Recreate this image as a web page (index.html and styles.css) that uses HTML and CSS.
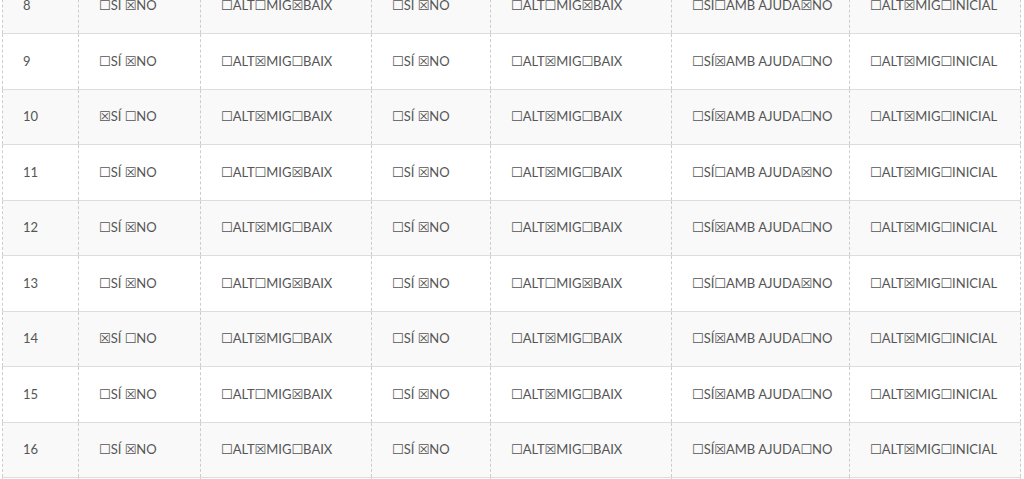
FILE: index.html
```html
<!DOCTYPE html>
<html lang="ca">
<head>
<meta charset="utf-8">
<link rel="stylesheet" href="styles.css">
</head>
<body>
<div class="wrap">
<table class="grid">
<colgroup>
<col class="c0"><col class="c1"><col class="c2"><col class="c3"><col class="c4"><col class="c5"><col class="c6">
</colgroup>
<tbody>
<tr class="odd"><td>8</td><td>☐SÍ ☒NO</td><td>☐ALT☐MIG☒BAIX</td><td>☐SÍ ☒NO</td><td>☐ALT☐MIG☒BAIX</td><td>☐SÍ☐AMB AJUDA☒NO</td><td>☐ALT☒MIG☐INICIAL</td></tr>
<tr><td>9</td><td>☐SÍ ☒NO</td><td>☐ALT☒MIG☐BAIX</td><td>☐SÍ ☒NO</td><td>☐ALT☒MIG☐BAIX</td><td>☐SÍ☒AMB AJUDA☐NO</td><td>☐ALT☒MIG☐INICIAL</td></tr>
<tr class="odd"><td>10</td><td>☒SÍ ☐NO</td><td>☐ALT☒MIG☐BAIX</td><td>☐SÍ ☒NO</td><td>☐ALT☒MIG☐BAIX</td><td>☐SÍ☒AMB AJUDA☐NO</td><td>☐ALT☒MIG☐INICIAL</td></tr>
<tr><td>11</td><td>☐SÍ ☒NO</td><td>☐ALT☐MIG☒BAIX</td><td>☐SÍ ☒NO</td><td>☐ALT☒MIG☐BAIX</td><td>☐SÍ☐AMB AJUDA☒NO</td><td>☐ALT☒MIG☐INICIAL</td></tr>
<tr class="odd"><td>12</td><td>☐SÍ ☒NO</td><td>☐ALT☒MIG☐BAIX</td><td>☐SÍ ☒NO</td><td>☐ALT☒MIG☐BAIX</td><td>☐SÍ☒AMB AJUDA☐NO</td><td>☐ALT☒MIG☐INICIAL</td></tr>
<tr><td>13</td><td>☐SÍ ☒NO</td><td>☐ALT☐MIG☒BAIX</td><td>☐SÍ ☒NO</td><td>☐ALT☐MIG☒BAIX</td><td>☐SÍ☐AMB AJUDA☒NO</td><td>☐ALT☒MIG☐INICIAL</td></tr>
<tr class="odd"><td>14</td><td>☒SÍ ☐NO</td><td>☐ALT☒MIG☐BAIX</td><td>☐SÍ ☒NO</td><td>☐ALT☒MIG☐BAIX</td><td>☐SÍ☒AMB AJUDA☐NO</td><td>☐ALT☒MIG☐INICIAL</td></tr>
<tr><td>15</td><td>☐SÍ ☒NO</td><td>☐ALT☐MIG☒BAIX</td><td>☐SÍ ☒NO</td><td>☐ALT☒MIG☐BAIX</td><td>☐SÍ☒AMB AJUDA☐NO</td><td>☐ALT☒MIG☐INICIAL</td></tr>
<tr class="odd"><td>16</td><td>☐SÍ ☒NO</td><td>☐ALT☒MIG☐BAIX</td><td>☐SÍ ☒NO</td><td>☐ALT☒MIG☐BAIX</td><td>☐SÍ☒AMB AJUDA☐NO</td><td>☐ALT☒MIG☐INICIAL</td></tr>
<tr><td>17</td><td>☐SÍ ☒NO</td><td>☐ALT☒MIG☐BAIX</td><td>☐SÍ ☒NO</td><td>☐ALT☒MIG☐BAIX</td><td>☐SÍ☒AMB AJUDA☐NO</td><td>☐ALT☒MIG☐INICIAL</td></tr>
</tbody>
</table>
</div>
</body>
</html>
```

FILE: styles.css
```css
html, body {
  margin: 0;
  padding: 0;
  background: #fff;
}
.wrap {
  width: 1024px;
  height: 479px;
  overflow: hidden;
  padding-left: 2px;
  box-sizing: border-box;
}
.grid {
  margin-top: -22.5px;
  width: 1018px;
  border-collapse: collapse;
  table-layout: fixed;
  font-family: Lato, "DejaVu Sans", sans-serif;
  font-size: 13px;
  color: #555;
}
.c0 { width: 76px; }
.c1 { width: 122px; }
.c2 { width: 171px; }
.c3 { width: 119px; }
.c4 { width: 181px; }
.c5 { width: 178px; }
.c6 { width: 171px; }
.grid td {
  height: 55.5px;
  padding: 0 0 1px 20px;
  box-sizing: border-box;
  border-top: 1px solid #ddd;
  border-bottom: 1px solid #ddd;
  border-left: 1px dashed #ccc;
  border-right: 1px dashed #ccc;
  vertical-align: middle;
  text-align: left;
  white-space: nowrap;
  line-height: 18px;
}
.grid tr.odd td {
  background: #f9f9f9;
}
```
